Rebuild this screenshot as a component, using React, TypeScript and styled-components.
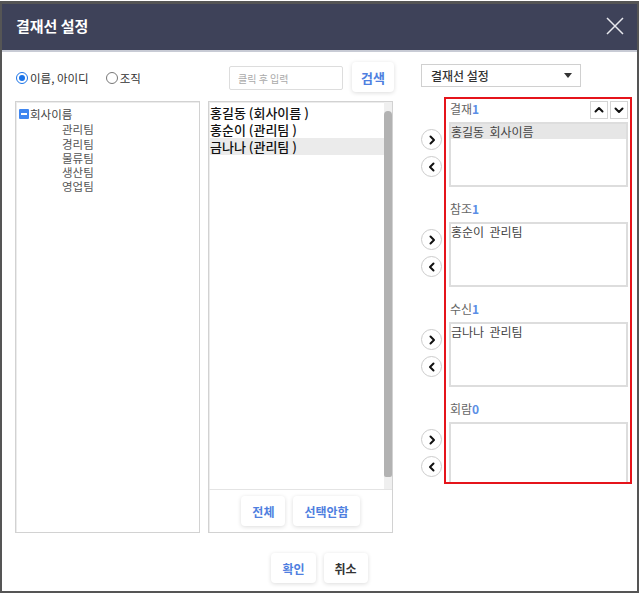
import { styled, createGlobalStyle } from "styled-components";

const GlobalStyle = createGlobalStyle`
  body {
    margin: 0;
    background: #ffffff;
    font-family: "Noto Sans CJK KR", "Noto Sans", sans-serif;
  }
  * {
    box-sizing: border-box;
  }
`;

const Frame = styled.div`
  width: 639px;
  height: 592px;
  margin-top: 1px;
  border: 2px solid #555555;
  border-top-width: 3px;
  display: flex;
  flex-direction: column;
  background: #ffffff;
`;

const Header = styled.div`
  height: 48px;
  flex-shrink: 0;
  background: #3e4259;
  border-bottom: 2px solid #c8cbd5;
  display: flex;
  align-items: center;
  justify-content: space-between;
  padding: 0 12px 2px 14px;
`;

const Title = styled.h1`
  margin: 0;
  color: #ffffff;
  font-size: 15px;
  font-weight: 700;
  line-height: 20px;
`;

const CloseButton = styled.button`
  border: none;
  background: none;
  padding: 0;
  width: 20px;
  height: 20px;
  display: flex;
  svg {
    width: 20px;
    height: 20px;
  }
`;

const Main = styled.div`
  display: flex;
  gap: 8px;
  padding-left: 13px;
`;

const Column = styled.div<{ $width: number }>`
  width: ${(p) => p.$width}px;
  display: flex;
  flex-direction: column;
`;

const Toolbar = styled.div<{ $end?: boolean }>`
  height: 49px;
  display: flex;
  align-items: center;
  justify-content: ${(p) => (p.$end ? "flex-end" : "flex-start")};
  gap: ${(p) => (p.$end ? 9 : 0)}px;
  padding-top: 3px;
`;

const RadioLabel = styled.label`
  display: flex;
  align-items: center;
  gap: 2px;
  font-size: 11.5px;
  color: #333333;
  line-height: 16px;
  margin-right: 16px;
  margin-left: 1px;
`;

const RadioDot = styled.span<{ $checked?: boolean }>`
  width: 12px;
  height: 12px;
  border-radius: 50%;
  border: 1px solid ${(p) => (p.$checked ? "#1a73e8" : "#777777")};
  display: flex;
  align-items: center;
  justify-content: center;
  &::after {
    content: "";
    width: 6px;
    height: 6px;
    border-radius: 50%;
    background: ${(p) => (p.$checked ? "#1a73e8" : "transparent")};
  }
`;

const SearchInput = styled.input`
  width: 114px;
  height: 24px;
  border: 1px solid #dddddd;
  border-radius: 2px;
  padding: 0 8px;
  font-family: inherit;
  font-size: 10px;
  color: #333333;
  &::placeholder {
    color: #aaaaaa;
  }
`;

const SoftButton = styled.button<{ $tone?: "blue" | "dark" }>`
  height: 30px;
  padding: 0 11px;
  border: none;
  border-radius: 4px;
  background: #ffffff;
  box-shadow: 0 1px 4px rgba(0, 0, 0, 0.14);
  font-family: inherit;
  font-size: 12px;
  font-weight: 700;
  color: ${(p) => (p.$tone === "dark" ? "#333333" : "#4f7fe0")};
  cursor: pointer;
`;

const SearchButton = styled(SoftButton)`
  font-size: 13px;
  width: 42px;
  padding: 0;
  margin-right: -1px;
  margin-top: -2px;
`;

const Box = styled.div`
  height: 432px;
  border: 1px solid #d2d2d2;
  box-shadow: inset 1px 1px 0 #ececec;
  display: flex;
  flex-direction: column;
`;

const Tree = styled.div`
  padding: 5px 3px;
  font-size: 11.5px;
  color: #444444;
  line-height: 14.3px;
`;

const TreeRoot = styled.div`
  display: flex;
  align-items: center;
  gap: 1px;
  margin-bottom: 1px;
`;

const Toggle = styled.span`
  width: 10px;
  height: 10px;
  border-radius: 1px;
  background: #3f86f0;
  display: flex;
  align-items: center;
  justify-content: center;
  &::after {
    content: "";
    width: 6px;
    height: 1.5px;
    background: #ffffff;
  }
`;

const TreeChild = styled.div`
  padding-left: 43px;
  color: #555555;
`;

const ListArea = styled.div`
  flex: 1;
  display: flex;
  min-height: 0;
`;

const List = styled.div`
  flex: 1;
  padding-top: 2px;
`;

const ListItem = styled.div<{ $selected?: boolean }>`
  height: 17px;
  line-height: 17px;
  padding-left: 1px;
  font-size: 13px;
  font-weight: 500;
  color: #111111;
  background: ${(p) => (p.$selected ? "#ebebeb" : "transparent")};
  white-space: pre;
`;

const ScrollTrack = styled.div`
  width: 8px;
  background: #efefef;
  padding: 9px 0 12px;
  display: flex;
`;

const ScrollThumb = styled.div`
  flex: 1;
  background: #b2b2b2;
  border-radius: 4px 4px 2px 2px;
`;

const ListFooter = styled.div`
  height: 43px;
  border-top: 1px solid #e4e4e4;
  display: flex;
  align-items: center;
  justify-content: center;
  gap: 8px;
`;

const RightColumn = styled.div`
  width: 211px;
  margin-left: 20px;
  padding-top: 12px;
  display: flex;
  flex-direction: column;
`;

const Dropdown = styled.div`
  width: 160px;
  height: 23px;
  border: 1px solid #d0d0d0;
  display: flex;
  align-items: center;
  justify-content: space-between;
  padding: 0 8px 0 9px;
  font-size: 12px;
  font-weight: 500;
  color: #333333;
  margin-bottom: 10px;
  &::after {
    content: "";
    border-left: 4px solid transparent;
    border-right: 4px solid transparent;
    border-top: 5px solid #333333;
  }
`;

const LineArea = styled.div`
  position: relative;
  height: 387px;
`;

const Highlight = styled.div`
  position: absolute;
  top: 0;
  left: 23px;
  right: 0;
  bottom: 0;
  border: 2px solid #e5141b;
  pointer-events: none;
`;

const Sections = styled.div`
  height: 385px;
  padding: 2px 4px 0 0;
  overflow: hidden;
  display: flex;
  flex-direction: column;
  gap: 12px;
`;

const Section = styled.div`
  display: grid;
  grid-template-columns: 21px 1fr;
  grid-template-rows: 19px 65px;
  column-gap: 7px;
  row-gap: 4px;
`;

const SectionHead = styled.div`
  grid-column: 2;
  display: flex;
  align-items: center;
  justify-content: space-between;
`;

const SectionLabel = styled.span`
  font-size: 12px;
  color: #666666;
  padding-left: 1px;
  b {
    color: #5b8ee6;
    font-weight: 700;
  }
`;

const OrderButtons = styled.div`
  display: flex;
  gap: 2px;
  margin-top: 2px;
`;

const SquareButton = styled.button`
  width: 18px;
  height: 18px;
  padding: 0;
  border: 1px solid #d4d4d4;
  background: #ffffff;
  display: flex;
  align-items: center;
  justify-content: center;
  svg {
    width: 10px;
    height: 10px;
  }
`;

const Arrows = styled.div`
  grid-column: 1;
  grid-row: 2;
  display: flex;
  flex-direction: column;
  justify-content: center;
  gap: 6px;
  padding-bottom: 3px;
`;

const CircleButton = styled.button`
  width: 21px;
  height: 21px;
  padding: 0;
  border: 1px solid #cccccc;
  border-radius: 50%;
  background: #ffffff;
  display: flex;
  align-items: center;
  justify-content: center;
  svg {
    width: 10px;
    height: 10px;
  }
`;

const LineBox = styled.div`
  grid-column: 2;
  grid-row: 2;
  border: 2px solid #dddddd;
  font-size: 12px;
  color: #444444;
`;

const LineItem = styled.div<{ $selected?: boolean }>`
  height: 15px;
  line-height: 15px;
  padding-left: 0;
  background: ${(p) => (p.$selected ? "#e6e6e6" : "transparent")};
  white-space: pre;
`;

const BottomBar = styled.div`
  margin-top: 20px;
  display: flex;
  justify-content: center;
  gap: 8px;
`;

const Chevron = ({ dir }: { dir: "left" | "right" | "up" | "down" }) => {
  const d = {
    right: "M3.5 1.5 L7 5 L3.5 8.5",
    left: "M6.5 1.5 L3 5 L6.5 8.5",
    up: "M1.5 6.5 L5 3 L8.5 6.5",
    down: "M1.5 3.5 L5 7 L8.5 3.5",
  }[dir];
  return (
    <svg viewBox="0 0 10 10" fill="none">
      <path d={d} stroke="#111111" strokeWidth={2} strokeLinecap="round" strokeLinejoin="round" />
    </svg>
  );
};

const sections = [
  { label: "결재", items: ["홍길동  회사이름"], selected: 0, order: true },
  { label: "참조", items: ["홍순이  관리팀"], selected: -1, order: false },
  { label: "수신", items: ["금나나  관리팀"], selected: -1, order: false },
  { label: "회람", items: [] as string[], selected: -1, order: false },
];

const teams = ["관리팀", "경리팀", "물류팀", "생산팀", "영업팀"];

const people = [
  "홍길동 (회사이름 )",
  "홍순이 (관리팀 )",
  "금나나 (관리팀 )",
];

export default function App() {
  return (
    <>
      <GlobalStyle />
      <Frame>
        <Header>
          <Title>결재선 설정</Title>
          <CloseButton>
            <svg viewBox="0 0 20 20" fill="none">
              <path d="M2 2 L18 18 M18 2 L2 18" stroke="#e8e9ee" strokeWidth={1.5} />
            </svg>
          </CloseButton>
        </Header>

        <Main>
          <Column $width={185}>
            <Toolbar>
              <RadioLabel>
                <RadioDot $checked />
                이름, 아이디
              </RadioLabel>
              <RadioLabel>
                <RadioDot />
                조직
              </RadioLabel>
            </Toolbar>
            <Box>
              <Tree>
                <TreeRoot>
                  <Toggle />
                  회사이름
                </TreeRoot>
                {teams.map((team) => (
                  <TreeChild key={team}>{team}</TreeChild>
                ))}
              </Tree>
            </Box>
          </Column>

          <Column $width={185}>
            <Toolbar $end>
              <SearchInput placeholder="클릭 후 입력" />
              <SearchButton>검색</SearchButton>
            </Toolbar>
            <Box>
              <ListArea>
                <List>
                  {people.map((p, i) => (
                    <ListItem key={p} $selected={i === 2}>
                      {p}
                    </ListItem>
                  ))}
                </List>
                <ScrollTrack>
                  <ScrollThumb />
                </ScrollTrack>
              </ListArea>
              <ListFooter>
                <SoftButton>전체</SoftButton>
                <SoftButton>선택안함</SoftButton>
              </ListFooter>
            </Box>
          </Column>

          <RightColumn>
            <Dropdown>결재선 설정</Dropdown>
            <LineArea>
              <Sections>
                {sections.map((s) => (
                  <Section key={s.label}>
                    <SectionHead>
                      <SectionLabel>
                        {s.label}
                        <b>{s.items.length}</b>
                      </SectionLabel>
                      {s.order && (
                        <OrderButtons>
                          <SquareButton>
                            <Chevron dir="up" />
                          </SquareButton>
                          <SquareButton>
                            <Chevron dir="down" />
                          </SquareButton>
                        </OrderButtons>
                      )}
                    </SectionHead>
                    <Arrows>
                      <CircleButton>
                        <Chevron dir="right" />
                      </CircleButton>
                      <CircleButton>
                        <Chevron dir="left" />
                      </CircleButton>
                    </Arrows>
                    <LineBox>
                      {s.items.map((item, i) => (
                        <LineItem key={item} $selected={i === s.selected}>
                          {item}
                        </LineItem>
                      ))}
                    </LineBox>
                  </Section>
                ))}
              </Sections>
              <Highlight />
            </LineArea>
          </RightColumn>
        </Main>

        <BottomBar>
          <SoftButton>확인</SoftButton>
          <SoftButton $tone="dark">취소</SoftButton>
        </BottomBar>
      </Frame>
    </>
  );
}
